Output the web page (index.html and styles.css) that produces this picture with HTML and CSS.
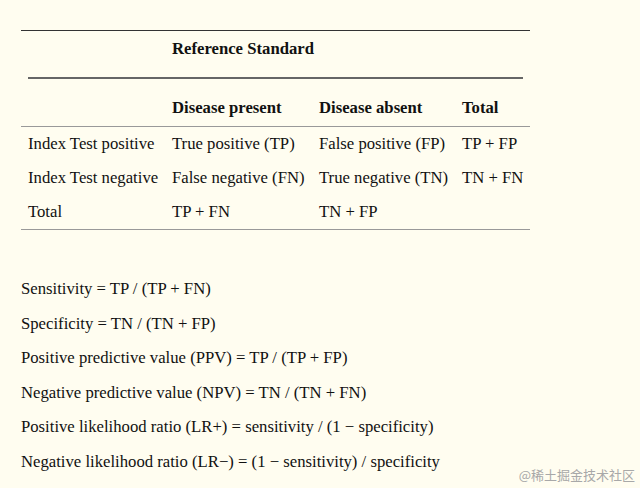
FILE: index.html
```html
<!DOCTYPE html>
<html>
<head>
<meta charset="utf-8">
<link rel="stylesheet" href="styles.css">
</head>
<body>
<div class="page">
  <table class="grid">
    <colgroup>
      <col class="c1"><col class="c2"><col class="c3"><col class="c4">
    </colgroup>
    <tr class="row-ref">
      <td></td>
      <th colspan="3">Reference Standard</th>
    </tr>
    <tr class="row-rule">
      <td colspan="4"><div class="rule"></div></td>
    </tr>
    <tr class="row-head">
      <td></td>
      <th>Disease present</th>
      <th>Disease absent</th>
      <th>Total</th>
    </tr>
    <tr class="row-data">
      <td>Index Test positive</td>
      <td>True positive (TP)</td>
      <td>False positive (FP)</td>
      <td>TP + FP</td>
    </tr>
    <tr class="row-data">
      <td>Index Test negative</td>
      <td>False negative (FN)</td>
      <td>True negative (TN)</td>
      <td>TN + FN</td>
    </tr>
    <tr class="row-data row-last">
      <td>Total</td>
      <td>TP + FN</td>
      <td>TN + FP</td>
      <td></td>
    </tr>
  </table>

  <div class="formulas">
    <p>Sensitivity = TP / (TP + FN)</p>
    <p>Specificity = TN / (TN + FP)</p>
    <p>Positive predictive value (PPV) = TP / (TP + FP)</p>
    <p>Negative predictive value (NPV) = TN / (TN + FN)</p>
    <p>Positive likelihood ratio (LR+) = sensitivity / (1 − specificity)</p>
    <p>Negative likelihood ratio (LR−) = (1 − sensitivity) / specificity</p>
  </div>
</div>
<div class="watermark">@稀土掘金技术社区</div>
</body>
</html>
```

FILE: styles.css
```css
html, body {
  margin: 0;
  padding: 0;
  background: #fffdf0;
}
body {
  width: 640px;
  height: 488px;
  position: relative;
  overflow: hidden;
  font-family: "Liberation Serif", "Times New Roman", serif;
  font-size: 16.7px;
  color: #111;
}
.page {
  padding: 30px 0 0 21px;
}
.grid {
  border-collapse: collapse;
  table-layout: fixed;
  width: 509px;
  border-top: 1px solid #333;
  border-bottom: 1px solid #999;
}
.c1 { width: 144px; }
.c2 { width: 147px; }
.c3 { width: 143px; }
.c4 { width: 75px; }
.grid td, .grid th {
  padding: 0 7px;
  text-align: left;
  white-space: nowrap;
  line-height: 20px;
}
.grid th {
  font-weight: bold;
}
.row-ref td, .row-ref th {
  height: 35px;
  vertical-align: middle;
}
.row-rule td {
  height: 2px;
  padding-top: 11px;
  vertical-align: top;
  line-height: 0;
}
.rule {
  height: 2px;
  background: #666;
}
.row-head td, .row-head th {
  height: 39px;
  padding-bottom: 8px;
  vertical-align: bottom;
  border-bottom: 1px solid #999;
}
.row-data td {
  height: 34px;
  vertical-align: middle;
}
.formulas {
  margin-top: 49px;
  display: flex;
  flex-direction: column;
  gap: 14.6px;
}
.formulas p {
  margin: 0;
  line-height: 20px;
}
.watermark {
  position: absolute;
  right: 5px;
  bottom: 4px;
  font-family: "Noto Sans CJK SC", sans-serif;
  font-size: 13px;
  line-height: 18px;
  color: #a8a8a8;
}
```
